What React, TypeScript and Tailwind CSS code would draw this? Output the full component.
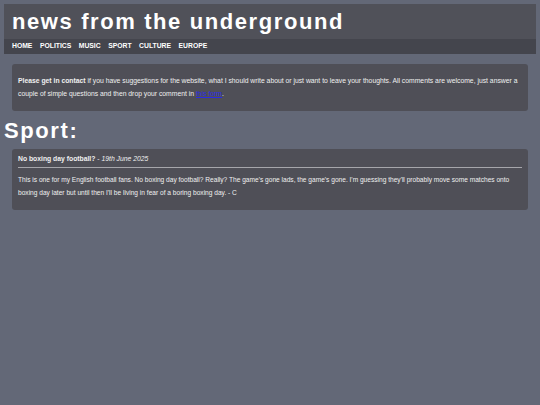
import React from "react";

export default function App() {
  const nav = ["HOME", "POLITICS", "MUSIC", "SPORT", "CULTURE", "EUROPE"];
  return (
    <div
      className="min-h-[405px] w-full bg-[#636877] p-[4px] text-white"
      style={{ fontFamily: '"Liberation Sans", Arial, sans-serif' }}
    >
      <header className="flex flex-col">
        <div className="flex h-[35px] items-center bg-[#505159] px-[8px]">
          <h1 className="text-[22px] font-bold leading-none tracking-[1.6px]">news from the underground</h1>
        </div>
        <nav className="flex h-[15px] items-center gap-[7.5px] bg-[#44454d] px-[8px] text-[6.8px] font-bold">
          {nav.map((n) => (
            <span key={n}>{n}</span>
          ))}
        </nav>
      </header>

      <div className="mx-[8px] mt-[10px] rounded-[3px] bg-[#4f4f57] px-[6px] pb-[11px] pt-[10px] text-[6.8px] leading-[13px] text-[#f0f0f0]">
        <p>
          <b>Please get in contact</b> if you have suggestions for the website, what I should write about or just want to leave your thoughts. All comments are welcome, just answer a couple of simple questions and then drop your comment in{" "}
          <a className="text-[#2a2ae8] underline">this form</a>.
        </p>
      </div>

      <h2 className="mt-[4px] text-[22px] font-bold leading-[32px] tracking-[1.6px]">Sport:</h2>

      <div className="mx-[8px] mt-[2px] rounded-[3px] bg-[#4f4f57] px-[6px] pb-[11px] pt-[4px] text-[6.8px] text-[#f0f0f0]">
        <div className="border-b border-[#a6a6ab] pb-[3px] leading-[11px]">
          <b>No boxing day football?</b> - <i>19th June 2025</i>
        </div>
        <p className="mt-[6px] text-[6.6px] leading-[12.5px]">
          This is one for my English football fans. No boxing day football? Really? The game's gone lads, the game's gone. I'm guessing they'll probably move some matches onto boxing day later but until then I'll be living in fear of a boring boxing day. - C
        </p>
      </div>
    </div>
  );
}
